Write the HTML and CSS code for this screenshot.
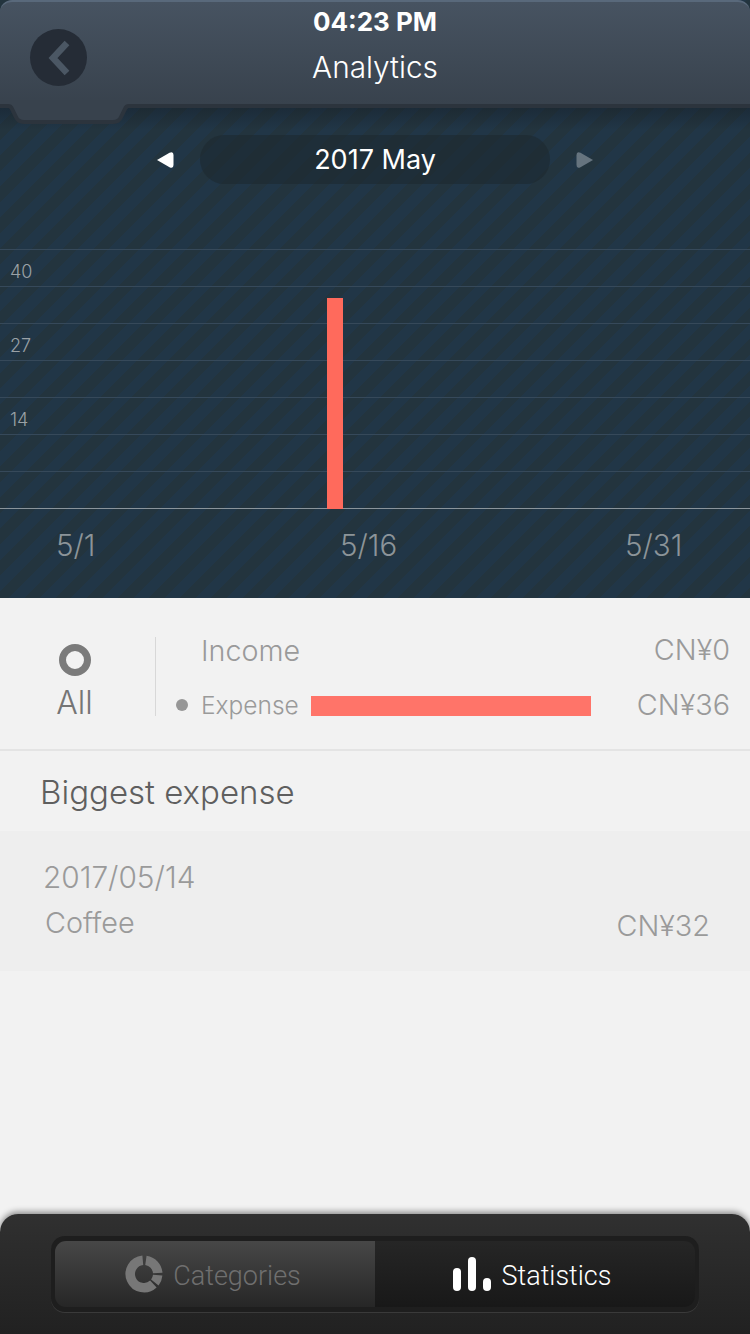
FILE: index.html
```html
<!DOCTYPE html>
<html lang="en">
<head>
	<meta charset="UTF-8">
	<title>Analytics</title>
	<link rel="stylesheet" href="styles.css">
</head>
<body>
	<div class="page">
		<div class="top">
			<div class="header">
				<svg class="back-tab" width="140" height="26" viewBox="0 0 140 26"><path d="M-6 -6H146V6H129Q126 6 125 9L121 17Q119 22 113 22H24Q18 22 16 17L12 9Q11 6 8 6H-6Z" fill="#38424d" stroke="#2c343d" stroke-width="4"/></svg>
				<div class="back-btn">
					<svg width="30" height="36" viewBox="0 0 30 36"><path d="M23 3 9 18 23 33" fill="none" stroke="#4b5764" stroke-width="6.500"/></svg>
				</div>
				<div class="time">04:23 PM</div>
				<div class="title">Analytics</div>
			</div>

			<div class="month-row">
				<svg width="18" height="16" viewBox="0 0 18 16"><path d="M1 8 13.500 .8Q17.500 -1 17.500 3V13Q17.500 17 13.500 15.200Z" fill="#fff"/></svg>
				<div class="month-pill">2017 May</div>
				<svg width="18" height="16" viewBox="0 0 18 16"><path d="M17 8 4.500 .8Q.5 -1 .5 3V13Q.5 17 4.500 15.200Z" fill="#66747f"/></svg>
			</div>
			<div class="plot">
				<div class="grid-row"><span>40</span></div>
				<div class="grid-row"></div>
				<div class="grid-row"><span>27</span></div>
				<div class="grid-row"></div>
				<div class="grid-row"><span>14</span></div>
				<div class="grid-row"></div>
				<div class="grid-row"></div>
				<div class="bar"></div>
			</div>
			<div class="x-axis">
				<span>5/1</span>
				<span>5/16</span>
				<span>5/31</span>
			</div>
		</div>

		<div class="summary">
			<div class="all-col">
				<div class="ring"></div>
				<div class="all-label">All</div>
			</div>
			<div class="legend">
				<div class="legend-row income">
					<span class="legend-name">Income</span>
					<span class="legend-bar"></span>
					<span class="legend-amount">CN¥0</span>
				</div>
				<div class="legend-row expense">
					<span class="dot"></span>
					<span class="legend-name">Expense</span>
					<span class="legend-bar"><i class="fill"></i></span>
					<span class="legend-amount">CN¥36</span>
				</div>
			</div>
		</div>

		<div class="section-title">Biggest expense</div>

		<div class="expense-item">
			<div class="item-date">2017/05/14</div>
			<div class="item-row">
				<span>Coffee</span>
				<span class="item-amount">CN¥32</span>
			</div>
		</div>

		<div class="tabbar">
			<div class="segment">
				<div class="seg-btn">
					<svg width="38" height="38" viewBox="0 0 38 38"><g fill="none" stroke="#777" stroke-width="9.500"><path d="M20.910 5.390A13.750 13.750 0 0 1 32.720 18.040"/><path d="M32.700 20.200A13.750 13.750 0 0 1 29.840 27.470"/><path d="M28.380 29.060A13.750 13.750 0 1 1 17.800 5.300"/></g></svg>
					<span>Categories</span>
				</div>
				<div class="seg-btn active">
					<svg width="40" height="38" viewBox="0 0 40 38"><g fill="#fff"><rect x="1" y="13" width="8" height="23" rx="4"/><rect x="16" y="2" width="8" height="34" rx="4"/><rect x="31" y="23" width="8" height="13" rx="4"/></g></svg>
					<span>Statistics</span>
				</div>
			</div>
		</div>
	</div>
</body>
</html>
```

FILE: styles.css
```css
* {
	box-sizing: border-box;
}
body {
	margin: 0;
	background: #f2f2f2;
	font-family: Inter, "Liberation Sans", sans-serif;
}
.page {
	display: flex;
	flex-direction: column;
	width: 750px;
	height: 1334px;
	overflow: hidden;
}

/* top bar + chart */
.top {
	height: 598px;
	background:
		linear-gradient(rgba(20, 28, 35, 0.4), rgba(20, 28, 35, 0) 22px) 0 108px / 100% 30px no-repeat,
		repeating-linear-gradient(135deg, #23343e 0, #23343e 11px, #213647 11px, #213647 22px);
}
.header {
	position: relative;
	height: 108px;
	border-top: 2px solid #59697b;
	border-bottom: 4px solid #2c343d;
	border-radius: 12px 12px 0 0;
	background: linear-gradient(#475361, #38424d);
	text-align: center;
	color: #fff;
}
.time {
	padding-top: 3px;
	font-size: 26px;
	line-height: 33px;
	font-weight: 700;
}
.title {
	margin-top: 12px;
	font-size: 29.800px;
	line-height: 34px;
	font-weight: 300;
}
.back-tab {
	position: absolute;
	left: 0;
	top: 98px;
}
.back-btn {
	position: absolute;
	left: 30px;
	top: 27px;
	display: flex;
	align-items: center;
	justify-content: center;
	width: 57px;
	height: 57px;
	border-radius: 50%;
	background: #252c36;
}
.month-row {
	display: flex;
	align-items: center;
	justify-content: center;
	gap: 26px;
	padding-top: 27px;
}
.month-pill {
	width: 350px;
	height: 49px;
	border-radius: 25px;
	background: rgba(30, 40, 45, 0.55);
	color: #fff;
	font-size: 27px;
	line-height: 50px;
	text-align: center;
}
.plot {
	position: relative;
	margin-top: 65px;
	border-bottom: 1px solid #8a949b;
}
.grid-row {
	height: 37px;
	padding: 11px 0 0 10px;
	border-top: 1px solid #36495a;
	color: #9aa1a6;
	font-size: 18px;
	line-height: 22px;
	font-weight: 300;
}
.bar {
	position: absolute;
	left: 327px;
	bottom: -1px;
	width: 16px;
	height: 211px;
	background: #ff6a5c;
}
.x-axis {
	display: grid;
	grid-template-columns: 284px 285px auto;
	padding: 16px 0 0 56px;
	color: #8c9499;
	font-size: 29.500px;
	line-height: 40px;
	font-weight: 300;
}

/* income / expense */
.summary {
	display: flex;
	align-items: flex-start;
	height: 153px;
	padding-top: 39px;
	border-bottom: 2px solid #e4e4e4;
}
.all-col {
	display: flex;
	flex-direction: column;
	align-items: center;
	width: 156px;
	height: 79px;
	padding-right: 6px;
	border-right: 1px solid #d8d8d8;
}
.ring {
	flex: none;
	width: 32px;
	height: 32px;
	margin-top: 7px;
	border: 7px solid #7b7b7b;
	border-radius: 50%;
}
.all-label {
	flex: none;
	margin-top: 7px;
	color: #757575;
	font-size: 32px;
	line-height: 40px;
	font-weight: 300;
}
.legend {
	flex: 1;
	padding: 0 20px 0 20px;
	color: #9a9a9a;
}
.legend-row {
	display: flex;
	align-items: center;
}
.income {
	height: 26px;
	margin-bottom: 29px;
	padding-left: 25px;
}
.expense {
	height: 28px;
}
.dot {
	flex: none;
	width: 12px;
	height: 12px;
	margin: 0 13px 3px 0;
	border-radius: 50%;
	background: #979797;
}
.legend-name {
	width: 110px;
	font-weight: 300;
}
.income .legend-name {
	font-size: 28.700px;
}
.expense .legend-name {
	margin-top: -2px;
	font-size: 24.500px;
}
.legend-bar {
	width: 280px;
	height: 20px;
}
.fill {
	display: block;
	height: 20px;
	background: #ff7469;
}
.legend-amount {
	flex: 1;
	text-align: right;
	font-size: 28.800px;
	font-weight: 300;
}
.income .legend-amount {
	margin-top: -2px;
}
.expense .legend-amount {
	margin-top: -3px;
}

/* biggest expense */
.section-title {
	height: 80px;
	padding-left: 40px;
	color: #5f5f5f;
	font-size: 33px;
	line-height: 82px;
	font-weight: 300;
}
.expense-item {
	height: 140px;
	padding: 26px 40px 0 43px;
	background: #eeeeee;
	color: #9a9a9a;
	font-weight: 300;
}
.item-date {
	font-size: 29.800px;
	line-height: 40px;
}
.item-row {
	display: flex;
	justify-content: space-between;
	margin-top: 6px;
	padding-left: 2px;
	font-size: 28.800px;
	line-height: 40px;
}
.item-amount {
	padding-top: 3px;
}

/* bottom tabs */
.tabbar {
	flex: none;
	margin-top: auto;
	height: 120px;
	padding: 22px 0 0 51px;
	border-radius: 18px 18px 0 0;
	background: linear-gradient(#303030, #212121);
	box-shadow: 0 -2px 6px rgba(0, 0, 0, 0.45);
}
.segment {
	display: flex;
	width: 648px;
	height: 76px;
	padding: 5px 4px 5px;
	border-radius: 14px;
	background: #1e1e1e;
	box-shadow: 0 1px 0 #3a3a3a;
}
.seg-btn {
	display: flex;
	align-items: center;
	justify-content: center;
	gap: 10px;
	width: 320px;
	padding-right: 4px;
	border-radius: 11px 0 0 11px;
	background: linear-gradient(#474747, #262626);
	color: #6f6f6f;
	font-family: Roboto, "Liberation Sans", sans-serif;
	font-size: 27px;
	font-weight: 300;
}
.seg-btn span {
	padding-top: 3px;
}
.seg-btn.active {
	padding-right: 7px;
	border-radius: 0 11px 11px 0;
	background: linear-gradient(#262626, #181818);
	color: #fff;
}
```
